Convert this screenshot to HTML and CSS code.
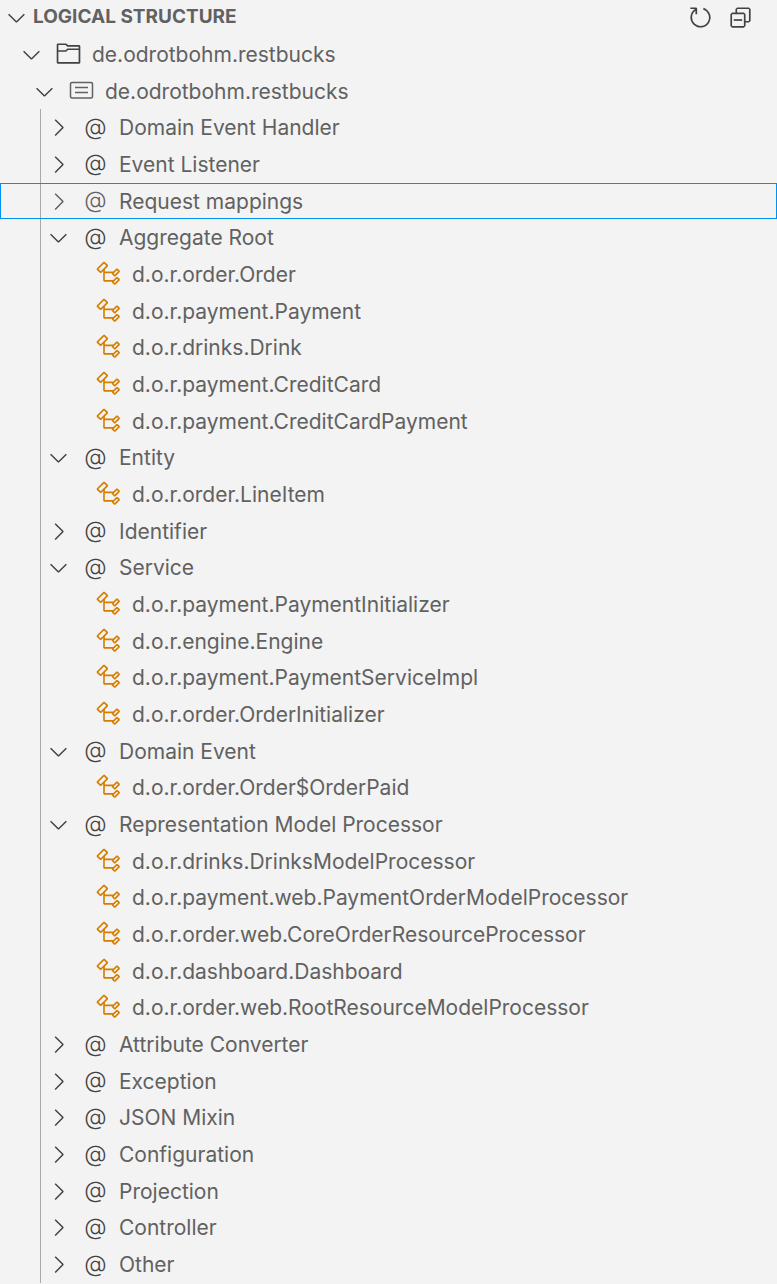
FILE: index.html
```
<!DOCTYPE html>
<html lang="en">
<head>
    <meta charset="UTF-8">
    <meta name="viewport" content="width=device-width, initial-scale=1.0">
    <title>Logical Structure</title>
    <link rel="stylesheet" href="styles.css">
</head>
<body>
    <svg class="sprite" aria-hidden="true">
        <symbol id="down" viewBox="0 0 16 16"><path d="M7.976 10.072l4.357-4.357.62.618L8.284 11h-.618L3 6.333l.619-.618 4.357 4.357z"/></symbol>
        <symbol id="right" viewBox="0 0 16 16"><path d="M10.072 8.024L5.715 3.667l.618-.62L11 7.716v.618L6.333 13l-.618-.619 4.357-4.357z"/></symbol>
        <symbol id="folder" viewBox="0 0 16 16"><path d="M14.5 3H7.71l-.85-.85L6.51 2h-5l-.5.5v11l.5.5h13l.5-.5v-10L14.5 3zm-.51 8.49V13h-12V7h4.49l.35-.15.86-.86H14v1.5l-.01 4zm0-6.49h-6.5l-.35.15-.86.86H2v-3h4.29l.85.85.36.15H14l-.01.99z"/></symbol>
        <symbol id="package" viewBox="0 0 27 27"><path fill="none" stroke="currentColor" stroke-width="1.5" d="M4 5.500h19a1.500 1.500 0 0 1 1.500 1.500v12.500a1.500 1.500 0 0 1-1.500 1.500h-19a1.500 1.500 0 0 1-1.500-1.500v-12.500a1.500 1.500 0 0 1 1.500-1.500zM7 10.500h13M7 15.500h13"/></symbol>
        <symbol id="class" viewBox="0 0 16 16"><path d="M11.34 9.71h.71l2.67-2.67v-.71L13.38 5h-.7l-1.82 1.81h-5V5.56l1.86-1.85V3l-2-2H5L1 5v.71l2 2h.71l1.14-1.15v5.79l.5.5H10v.52l1.33 1.34h.71l2.67-2.67v-.71L13.37 10h-.7l-1.86 1.85h-5v-4H10v.48l1.34 1.38zm1.69-3.65l.63.63-2 2-.63-.63 2-2zm0 5l.63.63-2 2-.63-.63 2-2zM3.35 6.65l-1.29-1.3 3.29-3.29 1.3 1.29-3.3 3.3z"/></symbol>
    </svg>

    <div class="panel">
        <div class="header">
            <button class="title" aria-expanded="true">
                <svg class="icon"><use href="#down"/></svg>
                <span>LOGICAL STRUCTURE</span>
            </button>
            <div class="actions">
                <button class="action" aria-label="Refresh">
                    <svg class="icon" viewBox="0 0 16 16"><path d="M4.681 3H2V2h3.500l.5.500V6H5V4a5 5 0 1 0 4.530-.761l.302-.954A6 6 0 1 1 4.681 3z"/></svg>
                </button>
                <button class="action" aria-label="Collapse All">
                    <svg class="icon" viewBox="0 0 16 16"><path d="M9 9H4v1h5V9z"/><path fill-rule="evenodd" d="M5 3l1-1h7l1 1v7l-1 1h-2v2l-1 1H3l-1-1V6l1-1h2V3zm1 2h4l1 1v4h2V3H6v2zm4 1H3v7h7V6z"/></svg>
                </button>
            </div>
        </div>

        <div class="tree" role="tree" aria-label="Logical Structure">
            <div class="row project" role="treeitem" aria-level="1" aria-expanded="true"><svg class="icon"><use href="#down"/></svg><svg class="icon kind"><use href="#folder"/></svg><span class="label">de.odrotbohm.restbucks</span></div>
            <div class="row package" role="treeitem" aria-level="2" aria-expanded="true"><svg class="icon"><use href="#down"/></svg><svg class="icon kind"><use href="#package"/></svg><span class="label">de.odrotbohm.restbucks</span></div>

            <div class="row group" role="treeitem" aria-level="3" aria-expanded="false"><svg class="icon"><use href="#right"/></svg><span class="kind at">@</span><span class="label">Domain Event Handler</span></div>
            <div class="row group" role="treeitem" aria-level="3" aria-expanded="false"><svg class="icon"><use href="#right"/></svg><span class="kind at">@</span><span class="label">Event Listener</span></div>
            <div class="row group selected" role="treeitem" aria-level="3" aria-expanded="false" aria-selected="true" tabindex="0"><svg class="icon"><use href="#right"/></svg><span class="kind at">@</span><span class="label">Request mappings</span></div>

            <div class="row group" role="treeitem" aria-level="3" aria-expanded="true"><svg class="icon"><use href="#down"/></svg><span class="kind at">@</span><span class="label">Aggregate Root</span></div>
            <div class="row type" role="treeitem" aria-level="4"><svg class="icon kind"><use href="#class"/></svg><span class="label">d.o.r.order.Order</span></div>
            <div class="row type" role="treeitem" aria-level="4"><svg class="icon kind"><use href="#class"/></svg><span class="label">d.o.r.payment.Payment</span></div>
            <div class="row type" role="treeitem" aria-level="4"><svg class="icon kind"><use href="#class"/></svg><span class="label">d.o.r.drinks.Drink</span></div>
            <div class="row type" role="treeitem" aria-level="4"><svg class="icon kind"><use href="#class"/></svg><span class="label">d.o.r.payment.CreditCard</span></div>
            <div class="row type" role="treeitem" aria-level="4"><svg class="icon kind"><use href="#class"/></svg><span class="label">d.o.r.payment.CreditCardPayment</span></div>

            <div class="row group" role="treeitem" aria-level="3" aria-expanded="true"><svg class="icon"><use href="#down"/></svg><span class="kind at">@</span><span class="label">Entity</span></div>
            <div class="row type" role="treeitem" aria-level="4"><svg class="icon kind"><use href="#class"/></svg><span class="label">d.o.r.order.LineItem</span></div>

            <div class="row group" role="treeitem" aria-level="3" aria-expanded="false"><svg class="icon"><use href="#right"/></svg><span class="kind at">@</span><span class="label">Identifier</span></div>

            <div class="row group" role="treeitem" aria-level="3" aria-expanded="true"><svg class="icon"><use href="#down"/></svg><span class="kind at">@</span><span class="label">Service</span></div>
            <div class="row type" role="treeitem" aria-level="4"><svg class="icon kind"><use href="#class"/></svg><span class="label">d.o.r.payment.PaymentInitializer</span></div>
            <div class="row type" role="treeitem" aria-level="4"><svg class="icon kind"><use href="#class"/></svg><span class="label">d.o.r.engine.Engine</span></div>
            <div class="row type" role="treeitem" aria-level="4"><svg class="icon kind"><use href="#class"/></svg><span class="label">d.o.r.payment.PaymentServiceImpl</span></div>
            <div class="row type" role="treeitem" aria-level="4"><svg class="icon kind"><use href="#class"/></svg><span class="label">d.o.r.order.OrderInitializer</span></div>

            <div class="row group" role="treeitem" aria-level="3" aria-expanded="true"><svg class="icon"><use href="#down"/></svg><span class="kind at">@</span><span class="label">Domain Event</span></div>
            <div class="row type" role="treeitem" aria-level="4"><svg class="icon kind"><use href="#class"/></svg><span class="label">d.o.r.order.Order$OrderPaid</span></div>

            <div class="row group" role="treeitem" aria-level="3" aria-expanded="true"><svg class="icon"><use href="#down"/></svg><span class="kind at">@</span><span class="label">Representation Model Processor</span></div>
            <div class="row type" role="treeitem" aria-level="4"><svg class="icon kind"><use href="#class"/></svg><span class="label">d.o.r.drinks.DrinksModelProcessor</span></div>
            <div class="row type" role="treeitem" aria-level="4"><svg class="icon kind"><use href="#class"/></svg><span class="label">d.o.r.payment.web.PaymentOrderModelProcessor</span></div>
            <div class="row type" role="treeitem" aria-level="4"><svg class="icon kind"><use href="#class"/></svg><span class="label">d.o.r.order.web.CoreOrderResourceProcessor</span></div>
            <div class="row type" role="treeitem" aria-level="4"><svg class="icon kind"><use href="#class"/></svg><span class="label">d.o.r.dashboard.Dashboard</span></div>
            <div class="row type" role="treeitem" aria-level="4"><svg class="icon kind"><use href="#class"/></svg><span class="label">d.o.r.order.web.RootResourceModelProcessor</span></div>

            <div class="row group" role="treeitem" aria-level="3" aria-expanded="false"><svg class="icon"><use href="#right"/></svg><span class="kind at">@</span><span class="label">Attribute Converter</span></div>
            <div class="row group" role="treeitem" aria-level="3" aria-expanded="false"><svg class="icon"><use href="#right"/></svg><span class="kind at">@</span><span class="label">Exception</span></div>
            <div class="row group" role="treeitem" aria-level="3" aria-expanded="false"><svg class="icon"><use href="#right"/></svg><span class="kind at">@</span><span class="label">JSON Mixin</span></div>
            <div class="row group" role="treeitem" aria-level="3" aria-expanded="false"><svg class="icon"><use href="#right"/></svg><span class="kind at">@</span><span class="label">Configuration</span></div>
            <div class="row group" role="treeitem" aria-level="3" aria-expanded="false"><svg class="icon"><use href="#right"/></svg><span class="kind at">@</span><span class="label">Projection</span></div>
            <div class="row group" role="treeitem" aria-level="3" aria-expanded="false"><svg class="icon"><use href="#right"/></svg><span class="kind at">@</span><span class="label">Controller</span></div>
            <div class="row group" role="treeitem" aria-level="3" aria-expanded="false"><svg class="icon"><use href="#right"/></svg><span class="kind at">@</span><span class="label">Other</span></div>
        </div>
    </div>
</body>
</html>
```

FILE: styles.css
```
* {
    box-sizing: border-box;
}
body {
    margin: 0;
    background-color: #f3f3f3;
    color: #616161;
    font-family: Inter, "Liberation Sans", sans-serif;
    font-size: 21px;
    line-height: 28px;
}
button {
    padding: 0;
    border: 0;
    background: none;
    color: inherit;
    font: inherit;
    cursor: pointer;
}
.sprite {
    display: none;
}
.panel {
    display: flex;
    flex-direction: column;
    min-height: 100vh;
    padding-bottom: 1px;
}
.header {
    display: flex;
    align-items: center;
    justify-content: space-between;
    height: 36px;
    padding: 0 23px 2px 3px;
}
.title {
    display: flex;
    align-items: center;
    gap: 3px;
    font-size: 19px;
    font-weight: 700;
}
.actions {
    display: flex;
    gap: 13px;
}
.action {
    display: flex;
}
.icon {
    flex: none;
    width: 27px;
    height: 27px;
    color: #424242;
    fill: currentColor;
}
/* rows share the panel height equally */
.tree {
    flex: 1;
    display: grid;
    grid-auto-rows: 1fr;
}
.row {
    display: flex;
    align-items: center;
    gap: 10px;
    min-height: 32px;
    white-space: nowrap;
    cursor: pointer;
}
.kind {
    margin-bottom: 2px;
}
.label {
    padding-top: 1px;
}
.project {
    padding-left: 18px;
}
.package {
    padding-left: 31px;
}
.package .kind {
    color: #616161;
}
/* indent guide under the package */
.group,
.type {
    background: linear-gradient(#a9a9a9, #a9a9a9) 40px 0 / 1px 100% no-repeat;
}
.group {
    padding-left: 45px;
}
.type {
    padding-left: 95px;
}
.type .kind {
    color: #d67e00;
}
.at {
    width: 27px;
    color: #424242;
    font-size: 23px;
    font-weight: 300;
    text-align: center;
}
.selected {
    outline: 1px solid #0090f1;
    outline-offset: -1px;
}
.selected .icon,
.selected .at {
    color: #616161;
}
```
